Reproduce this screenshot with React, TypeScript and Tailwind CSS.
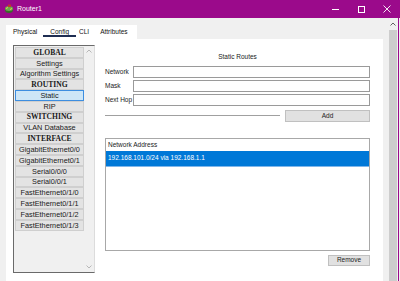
import React from "react";

const items: { label: string; header?: boolean; selected?: boolean }[] = [
  { label: "GLOBAL", header: true },
  { label: "Settings" },
  { label: "Algorithm Settings" },
  { label: "ROUTING", header: true },
  { label: "Static", selected: true },
  { label: "RIP" },
  { label: "SWITCHING", header: true },
  { label: "VLAN Database" },
  { label: "INTERFACE", header: true },
  { label: "GigabitEthernet0/0" },
  { label: "GigabitEthernet0/1" },
  { label: "Serial0/0/0" },
  { label: "Serial0/0/1" },
  { label: "FastEthernet0/1/0" },
  { label: "FastEthernet0/1/1" },
  { label: "FastEthernet0/1/2" },
  { label: "FastEthernet0/1/3" },
];

function RouterIcon() {
  return (
    <svg width="10" height="10" viewBox="0 0 10 10">
      <ellipse cx="5" cy="6" rx="4" ry="3" fill="#3a6b2a" />
      <ellipse cx="5" cy="4.5" rx="4" ry="2.5" fill="#6aa84f" />
      <path d="M2 4.5 L4 3.5 M6 5.5 L8 4.5" stroke="#e8d04a" strokeWidth="1" />
      <rect x="4" y="0.5" width="3" height="2.5" fill="#c0392b" />
    </svg>
  );
}

function Field({ label }: { label: string }) {
  return (
    <div className="flex items-center h-[11.5px] mb-[2.7px]">
      <span className="w-[28px] text-[6.5px] text-[#1a1a1a]">{label}</span>
      <div className="flex-1 h-full bg-white border border-[#9a9a9a]" />
    </div>
  );
}

export default function App() {
  return (
    <div
      className="w-[400px] h-[281px] bg-[#f0f0f0] flex flex-col overflow-hidden"
      style={{ fontFamily: '"Liberation Sans", Arial, sans-serif' }}
    >
      {/* Title bar */}
      <div className="h-[18px] bg-[#9b0a8b] flex items-center pl-[4px] shrink-0">
        <RouterIcon />
        <span className="ml-[3px] text-[7px] text-white">Router1</span>
        <div className="flex-1" />
        <div className="flex items-center text-white">
          <div className="w-[26px] flex justify-center">
            <div className="w-[7px] h-px bg-white" />
          </div>
          <div className="w-[26px] flex justify-center">
            <div className="w-[7px] h-[7px] border border-white" />
          </div>
          <div className="w-[26px] flex justify-center">
            <svg width="8" height="8" viewBox="0 0 8 8">
              <path d="M0.5 0.5 L7.5 7.5 M7.5 0.5 L0.5 7.5" stroke="white" strokeWidth="0.9" />
            </svg>
          </div>
        </div>
      </div>

      <div className="flex flex-1 min-h-0">
        {/* Main area */}
        <div className="pl-[6px] pt-[7px] flex flex-col w-[383px]">
          {/* Tabs */}
          <div className="w-[131px] h-[14px] bg-white flex items-center text-[6.5px] text-[#111] relative shrink-0">
            <span className="ml-[7px]">Physical</span>
            <span className="ml-[13px] relative">
              Config
              <span className="absolute left-[-7px] right-[-7px] top-[8px] h-[2px] bg-[#1e2d52]" />
            </span>
            <span className="ml-[10px]">CLI</span>
            <span className="ml-[11px]">Attributes</span>
          </div>

          {/* Content panel */}
          <div className="flex-1 bg-white flex pl-[7px] pt-[6px]">
            {/* Left list */}
            <div className="w-[82px] h-[228px] flex border-l border-t border-b border-[#6a6a6a] border-r-[#dcdcdc] border-r bg-[#f0f0f0]">
              <div className="flex-1 flex flex-col pl-[1px] pt-[1px]">
                {items.map((it) => (
                  <div
                    key={it.label}
                    className={
                      "h-[10.8px] flex items-center justify-center border leading-none whitespace-nowrap overflow-hidden " +
                      (it.selected
                        ? "bg-[#cde6f7] border-[#3d8ee0] text-[#1a1a1a]"
                        : "bg-[#e3e3e3] border-[#cfcfcf] text-[#1a1a1a]")
                    }
                  >
                    {it.header ? (
                      <span
                        className="text-[7.6px] font-bold"
                        style={{ fontFamily: '"Liberation Serif", serif' }}
                      >
                        {it.label}
                      </span>
                    ) : (
                      <span className="text-[7.3px]">{it.label}</span>
                    )}
                  </div>
                ))}
              </div>
              <div className="w-[10px] flex flex-col items-center justify-between py-[3px]">
                <svg width="6" height="4" viewBox="0 0 6 4">
                  <path d="M0.5 3.5 L3 1 L5.5 3.5" stroke="#b0b0b0" fill="none" strokeWidth="0.9" />
                </svg>
                <svg width="6" height="4" viewBox="0 0 6 4">
                  <path d="M0.5 0.5 L3 3 L5.5 0.5" stroke="#b0b0b0" fill="none" strokeWidth="0.9" />
                </svg>
              </div>
            </div>

            {/* Right side */}
            <div className="ml-[10px] w-[265px] flex flex-col text-[#1a1a1a]">
              <div className="h-[13px] mt-[5px] flex items-center justify-center text-[6.5px]">
                Static Routes
              </div>
              <div className="mt-[3px]">
                <Field label="Network" />
                <Field label="Mask" />
                <Field label="Next Hop" />
              </div>
              <div className="flex items-center mt-[1px] h-[12px]">
                <div className="w-[175px] h-[2px] border-t border-[#a0a0a0] border-b border-b-white" />
                <div className="ml-[5px] flex-1 h-full bg-[#e1e1e1] border border-[#c0c0c0] flex items-center justify-center text-[6.5px]">
                  Add
                </div>
              </div>

              {/* Table */}
              <div className="mt-[16px] h-[113px] border border-[#a8a8a8] bg-white flex flex-col">
                <div className="h-[12px] flex items-center pl-[2px] text-[6.5px]">Network Address</div>
                <div className="h-[16px] bg-[#0078d7] border-b-[1.5px] border-[#7fb6ea] flex items-center pl-[2px] text-[6.5px] text-white">
                  192.168.101.0/24 via 192.168.1.1
                </div>
              </div>
              <div className="flex justify-end mt-[4px]">
                <div className="w-[42px] h-[11px] bg-[#e1e1e1] border border-[#c0c0c0] flex items-center justify-center text-[6.5px]">
                  Remove
                </div>
              </div>
            </div>
          </div>
        </div>

        {/* Outer scrollbar */}
        <div className="ml-[6px] w-[8px] flex flex-col">
          <div className="h-[12px] flex items-center justify-center">
            <svg width="6" height="4" viewBox="0 0 6 4">
              <path d="M0.5 3.5 L3 1 L5.5 3.5" stroke="#606060" fill="none" strokeWidth="1" />
            </svg>
          </div>
          <div className="flex-1 bg-[#cdcdcd]" />
        </div>
        <div className="w-[1px] bg-[#9b0a8b] ml-[1px]" />
      </div>
    </div>
  );
}
